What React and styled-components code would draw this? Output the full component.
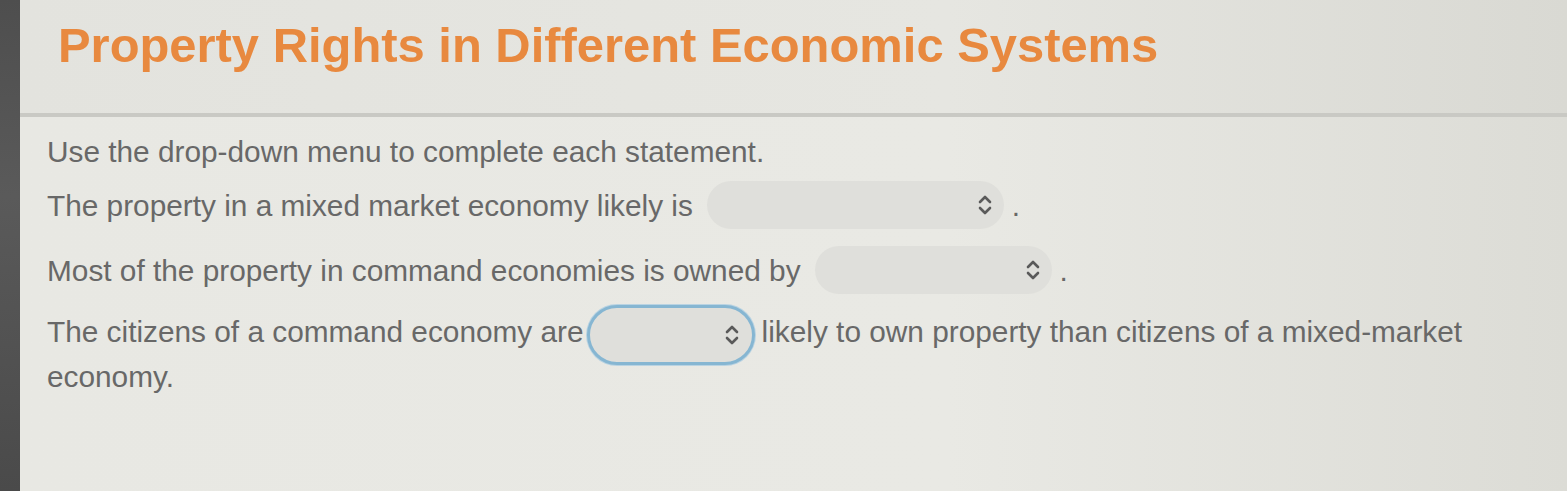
import React from 'react';
import styled, { createGlobalStyle } from 'styled-components';

const GlobalStyle = createGlobalStyle`
  html, body {
    margin: 0;
    padding: 0;
    background: #e6e6e1;
  }
  body {
    font-family: 'Liberation Sans', Arial, sans-serif;
  }
`;

const Page = styled.div`
  display: flex;
  width: 1567px;
  height: 491px;
  overflow: hidden;
`;

const Sidebar = styled.div`
  width: 20px;
  flex-shrink: 0;
  background: linear-gradient(to bottom, #4e4e4e, #5a5a5a 40%, #4a4a4a);
`;

const Main = styled.div`
  flex: 1;
  display: flex;
  flex-direction: column;
  background: linear-gradient(to right, #e8e8e3 0%, #e9e9e4 60%, #dcdcd6 100%);
`;

const Header = styled.header`
  height: 117px;
  padding-left: 38px;
  display: flex;
  align-items: center;
  border-bottom: 4px solid #c9c9c4;
  background: linear-gradient(to right, #e3e3de 0%, #e6e6e1 60%, #d9d9d3 100%);
  box-sizing: border-box;
`;

const Title = styled.h1`
  margin: 0 0 24px;
  font-size: 48.9px;
  font-weight: 700;
  color: #e8893f;
`;

const Content = styled.div`
  padding: 13px 0 0 27px;
  width: 1450px;
  color: #686868;
  font-size: 29.8px;
`;

const Statement = styled.p`
  margin: 0 0 ${p => p.$gap || 16}px;
  line-height: 44px;
`;

const Select = styled.span`
  display: inline-flex;
  align-items: center;
  justify-content: flex-end;
  vertical-align: middle;
  box-sizing: border-box;
  width: ${p => p.$width}px;
  height: ${p => (p.$focused ? 60 : 48)}px;
  margin: ${p => (p.$focused ? '-8px 7px -10px 3px' : '-6px 8px 0 14px')};
  padding-right: ${p => (p.$focused ? 12 : 11)}px;
  border-radius: 30px;
  background: #dfdfdb;
  border: ${p => (p.$focused ? '3px solid #86b6d2' : '0')};
  box-shadow: ${p => (p.$focused ? '0 0 0 1px #b9d3e2' : 'none')};
`;

const Chevrons = () => (
  <svg width="16" height="24" viewBox="0 0 16 24" fill="none" stroke="#5a5a5a" strokeWidth="2.6" strokeLinecap="round" strokeLinejoin="round">
    <path d="M3 9 L8 4 L13 9" />
    <path d="M3 15 L8 20 L13 15" />
  </svg>
);

const App = () => (
  <>
    <GlobalStyle />
    <Page>
      <Sidebar />
      <Main>
        <Header>
          <Title>Property Rights in Different Economic Systems</Title>
        </Header>
        <Content>
          <Statement $gap={10}>Use the drop-down menu to complete each statement.</Statement>
          <Statement $gap={20}>
            The property in a mixed market economy likely is
            <Select $width={297}><Chevrons /></Select>.
          </Statement>
          <Statement $gap={16}>
            Most of the property in command economies is owned by
            <Select $width={237}><Chevrons /></Select>.
          </Statement>
          <Statement>
            The citizens of a command economy are
            <Select $width={168} $focused><Chevrons /></Select>
            likely to own property than citizens of a mixed-market economy.
          </Statement>
        </Content>
      </Main>
    </Page>
  </>
);

export default App;
